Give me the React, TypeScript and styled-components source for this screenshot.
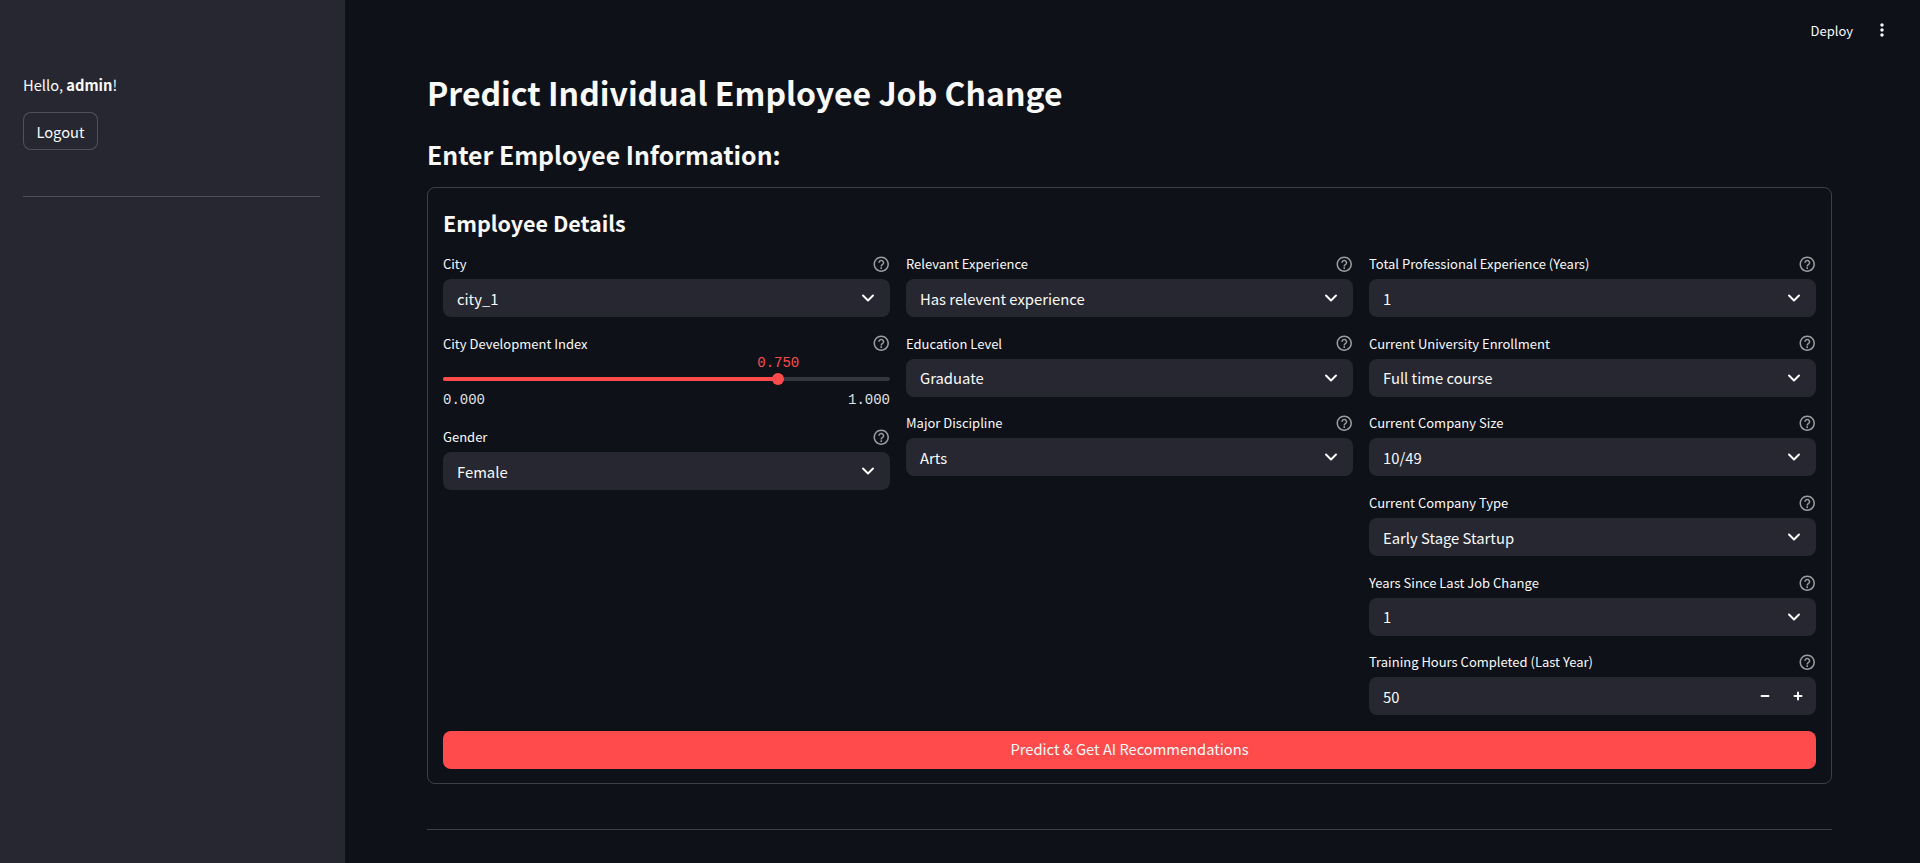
import * as React from 'react';
import styled, {createGlobalStyle} from 'styled-components';
import {ChevronDown, Minus, Plus} from 'lucide-react';
import {MdHelpOutline, MdMoreVert} from 'react-icons/md';

const FONT = `"Noto Sans CJK JP", "Noto Sans", sans-serif`;
const MONO = `"Liberation Mono", monospace`;

const GlobalStyle = createGlobalStyle`
html, body {
    margin: 0;
    height: 100%;
    background: #0e1117;
    overflow: hidden;
}
* { box-sizing: border-box; }
`

const Page = styled.div`
display: flex;
width: 1920px;
height: 863px;
font-family: ${FONT};
color: #fafafa;
background: #0e1117;
overflow: hidden;
`

const Sidebar = styled.aside`
width: 345px;
flex-shrink: 0;
background: #262730;
padding: 73px 25px 0 23px;
`

const Greeting = styled.p`
margin: 0;
font-size: 14.7px;
line-height: 24px;
`

const LogoutButton = styled.button`
display: block;
margin-top: 15px;
width: 75px;
height: 38px;
border: 1px solid rgba(250, 250, 250, 0.2);
border-radius: 8px;
background: #262730;
color: #fafafa;
font-family: ${FONT};
font-size: 14.7px;
padding: 0;
`

const SideRule = styled.hr`
margin: 46px 0 0 0;
border: none;
border-top: 1px solid rgba(250, 250, 250, 0.2);
`

const Main = styled.main`
flex: 1;
min-width: 0;
display: flex;
flex-direction: column;
`

const Toolbar = styled.header`
height: 60px;
display: flex;
align-items: center;
justify-content: flex-end;
padding-right: 28px;
gap: 19px;
font-size: 13px;
`

const MenuIcon = styled(MdMoreVert)`
font-size: 20px;
`

const Content = styled.div`
padding: 10px 88px 0 82px;
`

const Title = styled.h1`
margin: 0;
font-size: 32px;
line-height: 44px;
font-weight: 700;
`

const Subtitle = styled.h2`
margin: 22px 0 0 0;
font-size: 24.8px;
line-height: 36px;
font-weight: 700;
`

const FormBox = styled.section`
margin-top: 15px;
height: 597px;
border: 1px solid rgba(250, 250, 250, 0.2);
border-radius: 8px;
padding: 19px 15px 15px 15px;
`

const BoxTitle = styled.h3`
margin: 0;
font-size: 21.5px;
line-height: 32px;
font-weight: 700;
`

const Columns = styled.div`
margin-top: 15px;
display: grid;
grid-template-columns: repeat(3, 1fr);
column-gap: 16px;
height: 461px;
`

const Column = styled.div`
display: flex;
flex-direction: column;
gap: 16.7px;
`

const Field = styled.div`
display: flex;
flex-direction: column;
`

const LabelRow = styled.div`
display: flex;
align-items: center;
justify-content: space-between;
height: 20px;
margin-bottom: 5px;
font-size: 13px;
line-height: 20px;
`

const HelpIcon = styled(MdHelpOutline)`
font-size: 18.5px;
color: rgba(250, 250, 250, 0.6);
`

const Control = styled.div`
display: flex;
align-items: center;
justify-content: space-between;
height: 38px;
border-radius: 8px;
background: #262730;
padding: 0 12px 0 14px;
font-size: 14.8px;
`

const StepButtons = styled.div`
display: flex;
gap: 21px;
`

const SliderArea = styled.div`
display: flex;
flex-direction: column;
margin-top: -3px;
`

const SliderValue = styled.div<{ $percent: number }>`
height: 14px;
font-family: ${MONO};
font-size: 14px;
line-height: 14px;
color: #ff4b4b;
padding-left: calc(${props => props.$percent}% - 21px);
`

const Track = styled.div`
position: relative;
height: 4px;
margin-top: 7px;
border-radius: 2px;
background: rgba(250, 250, 250, 0.16);
`

const TrackFill = styled.div`
height: 100%;
border-radius: 2px;
background: #ff4b4b;
`

const Thumb = styled.div`
position: absolute;
top: -4px;
width: 12px;
height: 12px;
margin-left: -6px;
border-radius: 50%;
background: #ff4b4b;
`

const SliderEnds = styled.div`
display: flex;
justify-content: space-between;
margin-top: 9px;
height: 21px;
font-family: ${MONO};
font-size: 14px;
line-height: 20px;
color: #e0e0e4;
`

const SubmitButton = styled.button`
display: block;
width: 100%;
height: 38px;
margin-top: 16px;
border: none;
border-radius: 8px;
background: #ff4b4b;
color: #fafafa;
font-family: ${FONT};
font-size: 14.7px;
padding: 0 0 3px 0;
`

const BottomRule = styled.hr`
margin: 45px 0 0 0;
border: none;
border-top: 1px solid rgba(250, 250, 250, 0.2);
`

function Label(props: {text: string}) {
    return <LabelRow><span>{props.text}</span><HelpIcon /></LabelRow>
}

function SelectField(props: {label: string, value: string}) {
    return <Field>
        <Label text={props.label} />
        <Control><span>{props.value}</span><ChevronDown size={20} strokeWidth={2.4} /></Control>
    </Field>
}

function SliderField(props: {label: string, value: number}) {
    const percent = props.value * 100;
    return <Field>
        <Label text={props.label} />
        <SliderArea>
            <SliderValue $percent={percent}>{props.value.toFixed(3)}</SliderValue>
            <Track>
                <TrackFill style={{width: `${percent}%`}} />
                <Thumb style={{left: `${percent}%`}} />
            </Track>
            <SliderEnds><span>0.000</span><span>1.000</span></SliderEnds>
        </SliderArea>
    </Field>
}

function NumberField(props: {label: string, value: number}) {
    return <Field>
        <Label text={props.label} />
        <Control>
            <span>{props.value}</span>
            <StepButtons><Minus size={12} strokeWidth={4} /><Plus size={12} strokeWidth={4} /></StepButtons>
        </Control>
    </Field>
}

export default function App() {
    return <>
        <GlobalStyle />
        <Page>
            <Sidebar>
                <Greeting>Hello, <b>admin</b>!</Greeting>
                <LogoutButton>Logout</LogoutButton>
                <SideRule />
            </Sidebar>
            <Main>
                <Toolbar><span>Deploy</span><MenuIcon /></Toolbar>
                <Content>
                    <Title>Predict Individual Employee Job Change</Title>
                    <Subtitle>Enter Employee Information:</Subtitle>
                    <FormBox>
                        <BoxTitle>Employee Details</BoxTitle>
                        <Columns>
                            <Column>
                                <SelectField label="City" value="city_1" />
                                <SliderField label="City Development Index" value={0.75} />
                                <SelectField label="Gender" value="Female" />
                            </Column>
                            <Column>
                                <SelectField label="Relevant Experience" value="Has relevent experience" />
                                <SelectField label="Education Level" value="Graduate" />
                                <SelectField label="Major Discipline" value="Arts" />
                            </Column>
                            <Column>
                                <SelectField label="Total Professional Experience (Years)" value="1" />
                                <SelectField label="Current University Enrollment" value="Full time course" />
                                <SelectField label="Current Company Size" value="10/49" />
                                <SelectField label="Current Company Type" value="Early Stage Startup" />
                                <SelectField label="Years Since Last Job Change" value="1" />
                                <NumberField label="Training Hours Completed (Last Year)" value={50} />
                            </Column>
                        </Columns>
                        <SubmitButton>Predict &amp; Get AI Recommendations</SubmitButton>
                    </FormBox>
                    <BottomRule />
                </Content>
            </Main>
        </Page>
    </>
}
